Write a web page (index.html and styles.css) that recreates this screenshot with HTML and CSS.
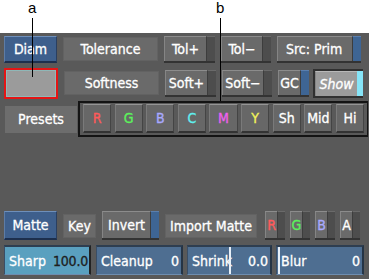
FILE: index.html
```html
<!DOCTYPE html>
<html>
<head>
<meta charset="utf-8">
<link rel="stylesheet" href="styles.css">
</head>
<body>
<div class="top">
  <span class="callout ca">a</span>
  <span class="callout cb">b</span>
  <div class="line la"></div>
  <div class="line lb"></div>
</div>
<div class="panel">
  <div class="row r1">
    <div class="btn blue w53">Diam</div>
    <div class="lbl w95">Tolerance</div>
    <div class="tog w51"><div class="face">Tol+</div><div class="strip"></div></div>
    <div class="tog w50"><div class="face">Tol−</div><div class="strip"></div></div>
    <div class="tog w84"><div class="face left">Src: Prim</div><div class="strip on"></div></div>
  </div>
  <div class="row r2">
    <div class="swatch"></div>
    <div class="lbl w95">Softness</div>
    <div class="tog w51"><div class="face">Soft+</div><div class="strip"></div></div>
    <div class="tog w50"><div class="face">Soft−</div><div class="strip"></div></div>
    <div class="tog w31"><div class="face">GC</div><div class="strip on"></div></div>
    <div class="tog show"><div class="face">Show</div><div class="strip lit"></div></div>
  </div>
  <div class="row r3">
    <div class="presets">Presets</div>
    <div class="pgroup">
      <div class="pb red">R</div>
      <div class="pb green">G</div>
      <div class="pb bluet">B</div>
      <div class="pb cyan">C</div>
      <div class="pb mag">M</div>
      <div class="pb yel">Y</div>
      <div class="pb">Sh</div>
      <div class="pb">Mid</div>
      <div class="pb">Hi</div>
    </div>
  </div>
  <div class="spacer"></div>
  <div class="row r4">
    <div class="btn blue w53">Matte</div>
    <div class="lbl w33">Key</div>
    <div class="tog w57"><div class="face">Invert</div><div class="strip on"></div></div>
    <div class="lbl w92">Import Matte</div>
    <div class="chans">
      <div class="tog ch"><div class="face red">R</div><div class="strip"></div></div>
      <div class="tog ch"><div class="face green">G</div><div class="strip"></div></div>
      <div class="tog ch"><div class="face bluet">B</div><div class="strip"></div></div>
      <div class="tog ch"><div class="face">A</div><div class="strip"></div></div>
    </div>
  </div>
  <div class="row r5">
    <div class="slider sharp w87"><span>Sharp</span><span class="val dark">100.0</span></div>
    <div class="slider w87 m5"><span>Cleanup</span><span class="val">0</span></div>
    <div class="slider w85 m4"><span>Shrink</span><span class="val">0.0</span><i class="mark" style="left:41px"></i></div>
    <div class="slider w88 m4"><span>Blur</span><span class="val">0</span><i class="mark" style="left:1px"></i></div>
  </div>
</div>
</body>
</html>
```
FILE: styles.css
```css
html, body {
  margin: 0;
  padding: 0;
  background: #ffffff;
}
body {
  width: 369px;
  height: 279px;
  overflow: hidden;
  font-family: "DejaVu Sans Condensed", "DejaVu Sans", sans-serif;
  font-size: 14px;
  color: #ffffff;
  -webkit-text-stroke: 0.3px;
  position: relative;
}
.top {
  height: 33px;
  background: #ffffff;
}
.callout {
  position: absolute;
  top: 0;
  color: #000;
  font-family: "Liberation Sans", Arial, sans-serif;
  font-size: 15px;
  line-height: 16px;
  -webkit-text-stroke: 0;
  z-index: 3;
}
.ca { left: 28px; }
.cb { left: 216px; }
.line {
  position: absolute;
  width: 1px;
  background: #000;
  z-index: 3;
}
.la { left: 32px; top: 18px; height: 59px; }
.lb { left: 220px; top: 18px; height: 83px; }
.panel {
  background: #595959;
  height: 246px;
  box-sizing: border-box;
  padding: 2px 0 0 4px;
  display: flex;
  flex-direction: column;
}
.row {
  display: flex;
  align-items: center;
  gap: 6px;
}
.r1 { height: 28px; }
.r2 { height: 32px; margin-top: 4px; }
.r3 { height: 36px; margin-top: 2px; gap: 1px; }
.spacer { height: 74px; }
.r4 { height: 29px; }
.r5 { height: 30px; margin-top: 5px; gap: 0; }

.w53 { width: 53px; }
.w95 { width: 95px; }
.w51 { width: 51px; }
.w50 { width: 50px; }
.w84 { width: 84px; }
.w31 { width: 31px; }
.w33 { width: 33px; }
.w57 { width: 57px; }
.w92 { width: 92px; }
.w87 { width: 87px; }
.w85 { width: 85px; }
.w88 { width: 88px; }
.m5 { margin-left: 5px; }
.m4 { margin-left: 4px; }

.btn {
  box-sizing: border-box;
  height: 27px;
  display: flex;
  align-items: center;
  justify-content: center;
  border-top: 1px solid #6e8fba;
  border-left: 1px solid #5d7ca6;
  border-bottom: 2px solid #1d2f4d;
  border-right: 1px solid #2a3f60;
}
.blue {
  background: #3e5f8c;
}
.r4 .btn { height: 29px; }

.lbl {
  box-sizing: border-box;
  height: 24px;
  background: #6a6a6a;
  border: 1px solid #626262;
  display: flex;
  align-items: center;
  justify-content: center;
}

.tog {
  display: flex;
  height: 27px;
  box-sizing: border-box;
  border-bottom: 2px solid #333;
}
.tog .face {
  flex: 1;
  background: #6a6a6a;
  border-top: 1px solid #8c8c8c;
  border-left: 1px solid #858585;
  display: flex;
  align-items: center;
  justify-content: center;
}
.tog .face.left {
  justify-content: flex-start;
  padding-left: 8px;
}
.tog .strip {
  width: 8px;
  background: #4d4d4d;
  border-top: 1px solid #6a6a6a;
  border-left: 1px solid #3d3d3d;
}
.tog .strip.on {
  background: #3e6594;
  border-top-color: #5a7fae;
}
.tog .strip.lit {
  background: #86e4f7;
  border-top-color: #b0f0ff;
}
.tog.show {
  width: 50px;
  height: 29px;
  margin-left: -2px;
  border: 2px solid #303030;
  border-right: none;
}
.tog.show .face {
  background: #9b9b9b;
  font-style: italic;
  border-top: 1px solid #b8b8b8;
}
.tog.show .strip { width: 6px; border: none; }

.swatch {
  box-sizing: border-box;
  width: 54px;
  height: 31px;
  border: 2px solid #e41515;
  background: #9b9b9b;
  box-shadow: inset 0 0 0 1px #8fb7b7;
}

.presets {
  margin-left: 1px;
  width: 72px;
  height: 27px;
  background: #6d6d6d;
  display: flex;
  align-items: center;
  justify-content: center;
}
.pgroup {
  box-sizing: border-box;
  width: 290px;
  height: 36px;
  border: 2px solid #141414;
  border-right-width: 1px;
  display: grid;
  grid-template-columns: repeat(9, 1fr);
  gap: 3.5px;
  padding: 1px 3px 2px 3px;
}
.pb {
  background: #676767;
  border-top: 1px solid #959595;
  border-left: 1px solid #7a7a7a;
  border-bottom: 2px solid #333;
  border-right: 1px solid #444;
  display: flex;
  align-items: center;
  justify-content: center;
}
.red { color: #ff5a5a; }
.green { color: #5cf25c; }
.bluet { color: #a9a9ff; }
.cyan { color: #5ff0f0; }
.mag { color: #f060f0; }
.yel { color: #f2f25a; }

.chans {
  display: flex;
  gap: 5px;
  margin-left: 2px;
}
.tog.ch {
  width: 20px;
  height: 29px;
}
.tog.ch .strip { width: 7px; }
.r4 .tog { height: 29px; }

.slider {
  position: relative;
  box-sizing: border-box;
  height: 30px;
  background: #4e6e91;
  border-top: 2px solid #2e3e50;
  border-left: 1px solid #3a4e66;
  border-right: 2px solid #253445;
  border-bottom: 1px solid #6d8db0;
  display: flex;
  align-items: center;
  justify-content: space-between;
  padding: 0 2px 0 4px;
}
.slider.sharp {
  background: #5aa0bf;
  border-right-color: #222;
  padding-right: 1px;
}
.val.dark { color: #1e1e1e; letter-spacing: -0.2px; }
.mark {
  position: absolute;
  top: 0;
  bottom: 0;
  width: 2px;
  background: #e8f0f8;
}
```
